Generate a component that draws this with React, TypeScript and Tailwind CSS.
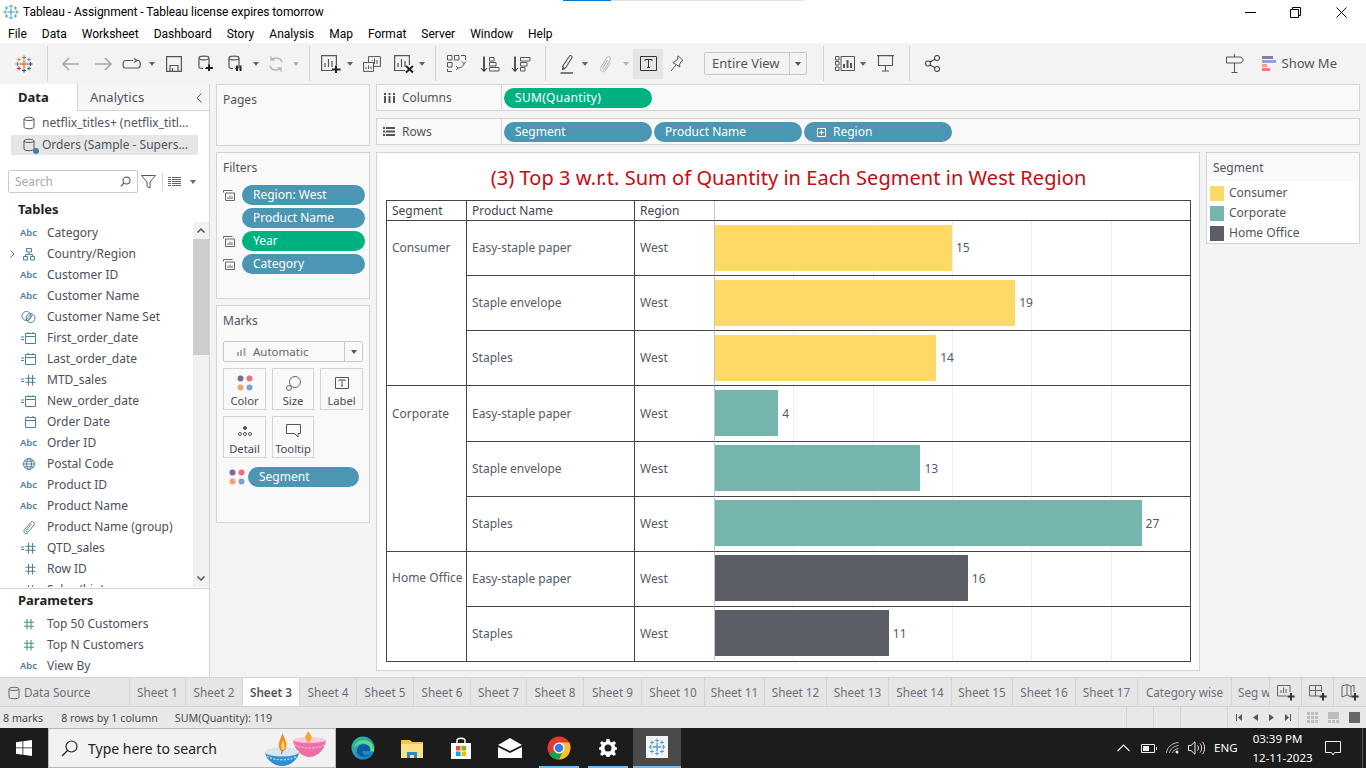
import React from "react";

const FONT = "font-['Noto_Sans','Liberation_Sans',sans-serif]";

const fields: { icon: string; name: string; chevron?: boolean }[] = [
	{ icon: "abc", name: "Category" },
	{ icon: "geo", name: "Country/Region", chevron: true },
	{ icon: "abc", name: "Customer ID" },
	{ icon: "abc", name: "Customer Name" },
	{ icon: "set", name: "Customer Name Set" },
	{ icon: "calcdate", name: "First_order_date" },
	{ icon: "calcdate", name: "Last_order_date" },
	{ icon: "calchash", name: "MTD_sales" },
	{ icon: "calcdate", name: "New_order_date" },
	{ icon: "date", name: "Order Date" },
	{ icon: "abc", name: "Order ID" },
	{ icon: "globe", name: "Postal Code" },
	{ icon: "abc", name: "Product ID" },
	{ icon: "abc", name: "Product Name" },
	{ icon: "clip", name: "Product Name (group)" },
	{ icon: "calchash", name: "QTD_sales" },
	{ icon: "hash", name: "Row ID" },
	{ icon: "hash", name: "Sales (bin)" },
];

const menus = ["File", "Data", "Worksheet", "Dashboard", "Story", "Analysis", "Map", "Format", "Server", "Window", "Help"];

const tabs: { label: string; cls: string }[] = [
	{ label: "Sheet 1", cls: "w-[56px]" },
	{ label: "Sheet 2", cls: "w-[57px]" },
	{ label: "Sheet 3", cls: "w-[57px] bg-white font-semibold text-[#4f5560]" },
	{ label: "Sheet 4", cls: "w-[57px]" },
	{ label: "Sheet 5", cls: "w-[57px]" },
	{ label: "Sheet 6", cls: "w-[57px]" },
	{ label: "Sheet 7", cls: "w-[56px]" },
	{ label: "Sheet 8", cls: "w-[57px]" },
	{ label: "Sheet 9", cls: "w-[58px]" },
	{ label: "Sheet 10", cls: "w-[63px]" },
	{ label: "Sheet 11", cls: "w-[60px]" },
	{ label: "Sheet 12", cls: "w-[62px]" },
	{ label: "Sheet 13", cls: "w-[62px]" },
	{ label: "Sheet 14", cls: "w-[63px]" },
	{ label: "Sheet 15", cls: "w-[61px]" },
	{ label: "Sheet 16", cls: "w-[63px]" },
	{ label: "Sheet 17", cls: "w-[62px]" },
	{ label: "Category wise", cls: "w-[94px]" },
];

const YELLOW = "#ffd966";
const TEAL = "#76b5ae";
const SLATE = "#5b5e66";

const rows = [
	{ product: "Easy-staple paper", value: 15, color: YELLOW },
	{ product: "Staple envelope", value: 19, color: YELLOW },
	{ product: "Staples", value: 14, color: YELLOW },
	{ product: "Easy-staple paper", value: 4, color: TEAL },
	{ product: "Staple envelope", value: 13, color: TEAL },
	{ product: "Staples", value: 27, color: TEAL },
	{ product: "Easy-staple paper", value: 16, color: SLATE },
	{ product: "Staples", value: 11, color: SLATE },
];

const Cross = ({ x, y, s, c, w = 1 }: { x: number; y: number; s: number; c: string; w?: number }) => (
	<path d={`M${x - s} ${y}H${x + s}M${x} ${y - s}V${y + s}`} stroke={c} strokeWidth={w} fill="none" />
);

const TableauLogo = ({ size = 18, mono }: { size?: number; mono?: string }) => {
	const c = (v: string) => mono ?? v;
	return (
		<svg width={size} height={size} viewBox="0 0 18 18">
			<Cross x={9} y={9} s={4} c={c("#e8762d")} w={1.4} />
			<Cross x={9} y={2.5} s={2} c={c("#5b879b")} />
			<Cross x={9} y={15.5} s={2} c={c("#1f457e")} />
			<Cross x={2.5} y={9} s={2} c={c("#59879b")} />
			<Cross x={15.5} y={9} s={2} c={c("#1f457e")} />
			<Cross x={4} y={4.5} s={2} c={c("#eb912b")} />
			<Cross x={14} y={4.5} s={2} c={c("#7099a6")} />
			<Cross x={4} y={13.5} s={2} c={c("#c72035")} />
			<Cross x={14} y={13.5} s={2} c={c("#5c6692")} />
		</svg>
	);
};

const Caret = ({ c = "#666" }: { c?: string }) => (
	<svg width="6" height="4" viewBox="0 0 6 4" className="shrink-0">
		<path d="M0 0H6L3 4Z" fill={c} />
	</svg>
);

const Slot = ({ className, children }: { className: string; children?: React.ReactNode }) => (
	<div className={`flex h-full shrink-0 items-center justify-center ${className}`}>{children}</div>
);

const Sep = ({ className = "" }: { className?: string }) => <div className={`h-[35px] w-px shrink-0 bg-[#d4d4d4] ${className}`} />;

const Ico = ({ w = 20, h = 20, c = "#555", sw = 1.2, children }: { w?: number; h?: number; c?: string; sw?: number; children: React.ReactNode }) => (
	<svg width={w} height={h} viewBox={`0 0 ${w} ${h}`} fill="none" stroke={c} strokeWidth={sw} className="shrink-0">
		{children}
	</svg>
);

const Cylinder = ({ c = "#555" }: { c?: string }) => (
	<Ico w={12} h={14} c={c} sw={1}>
		<path d="M1 3C1 .7 11 .7 11 3V11C11 13.3 1 13.3 1 11ZM1 3C1 5 11 5 11 3" />
	</Ico>
);

const FieldIcon = ({ type }: { type: string }) => {
	const c = "#4f8298";
	if (type === "abc") return <span className="text-[9.5px] font-semibold leading-none text-[#4f7f97]">Abc</span>;
	if (type === "geo")
		return (
			<Ico w={14} h={14} c={c} sw={1}>
				<path d="M4.5 1.5H9.5V5H4.5ZM1.5 9.5H5.5V13H1.5ZM8.5 9.5H12.5V13H8.5ZM7 5V7.5M3.5 9.5V7.5H10.5V9.5" />
			</Ico>
		);
	if (type === "set")
		return (
			<Ico w={15} h={14} c={c} sw={1}>
				<circle cx="5.5" cy="6" r="4.5" />
				<circle cx="9.5" cy="8" r="4.5" />
				<path d="M5 10L10 4M7 11L11.5 5" />
			</Ico>
		);
	if (type === "calcdate" || type === "date")
		return (
			<Ico w={16} h={14} c={c} sw={1}>
				{type === "calcdate" && <path d="M0 6H3M0 8.5H3" />}
				<path d="M4.5 2.5H14.5V12.5H4.5ZM4.5 5.5H14.5M7 1V3M12 1V3" />
			</Ico>
		);
	if (type === "calchash" || type === "hash")
		return (
			<Ico w={16} h={14} c={c} sw={1.1}>
				{type === "calchash" && <path d="M0 6H3M0 8.5H3" />}
				<path d="M7.5 2V12.5M11.5 2V12.5M4.5 5.3H14.5M4.5 9.3H14.5" />
			</Ico>
		);
	if (type === "globe")
		return (
			<Ico w={14} h={14} c={c} sw={1}>
				<circle cx="7" cy="7" r="5.5" />
				<ellipse cx="7" cy="7" rx="2.4" ry="5.5" />
				<path d="M1.5 7H12.5M2.3 4.2H11.7M2.3 9.8H11.7" />
			</Ico>
		);
	return (
		<Ico w={14} h={14} c={c} sw={1}>
			<path d="M9.5 4L4.500 10C3.500 11.300 5.300 12.800 6.500 11.500L12 5C13.500 3 10.800.4 9 2.200L2.500 9.500C.6 12 3.500 15 6 12.800" />
		</Ico>
	);
};

const Pill = ({ label, green, className = "", plus }: { label: string; green?: boolean; className?: string; plus?: boolean }) => (
	<div className={`flex h-[20px] items-center rounded-[10px] pl-[11px] text-[12px] text-white ${green ? "bg-[#00b180]" : "bg-[#4a96b3]"} ${className}`}>
		{plus && (
			<svg width="9" height="9" viewBox="0 0 9 9" className="mr-[7px] ml-[1px] shrink-0" fill="none" stroke="#fff" strokeWidth="1">
				<path d="M.5.5H8.500V8.500H.5ZM4.500 2V7M2 4.500H7" />
			</svg>
		)}
		{label}
	</div>
);

const Dots = ({ size = 16 }: { size?: number }) => (
	<svg width={size} height={size} viewBox="0 0 16 16" className="shrink-0">
		<circle cx="3.500" cy="3.500" r="3" fill="#7b6a95" />
		<circle cx="12.500" cy="3.500" r="3" fill="#ef6d7c" />
		<circle cx="3.500" cy="12.500" r="3" fill="#f2a36e" />
		<circle cx="12.500" cy="12.500" r="3" fill="#7ea2cf" />
	</svg>
);

const FilterIcon = () => (
	<Ico w={12} h={11} c="#666" sw={1}>
		<path d="M.5 2.500V.5H9.500M2.500 10.500H11.500V3H2.500ZM5 9V7M7 9V5.500M9 9V6.500" />
	</Ico>
);

const MarkBtn = ({ label, children, className = "" }: { label: string; children: React.ReactNode; className?: string }) => (
	<div className={`flex h-[42px] flex-col items-center justify-end border border-[#d4d4d4] text-[11.2px] leading-[16px] text-[#444b57] ${className}`}>
		<div className="flex h-[20px] items-center">{children}</div>
		{label}
	</div>
);

const Edge = () => (
	<svg width="24" height="24" viewBox="0 0 24 24">
		<defs>
			<linearGradient id="edge" x1="0" y1="0" x2="1" y2="1">
				<stop offset="0" stopColor="#35c1a0" />
				<stop offset="1" stopColor="#1170c8" />
			</linearGradient>
		</defs>
		<circle cx="12" cy="12" r="11.500" fill="url(#edge)" />
		<path d="M6 15C6 9 12 7 16 9C19 10.500 19.500 13 18.500 15H11.500C11 18 14 20 18 19C15 22 6 21.500 6 15Z" fill="#0c59a4" />
		<path d="M23 14C23 8 19 4 13 4C8 4 4 7 3 12C6 8 12 6.500 16 8.500C19.500 10.300 20 13.500 19 15.500H23Z" fill="#5ddc7c" />
	</svg>
);

const Chrome = () => (
	<svg width="24" height="24" viewBox="0 0 24 24">
		<circle cx="12" cy="12" r="11.500" fill="#e33b2e" />
		<path d="M12 12L2.100 17.700C4 21.200 7.700 23.500 12 23.500L17.700 13.500Z" fill="#1f9e48" />
		<path d="M12 6.500H22.400C23.900 9.500 23.900 14.500 21.900 17.800C19.800 21.300 16 23.500 12 23.500L17 13Z" fill="#fbc02d" />
		<circle cx="12" cy="12" r="5.500" fill="#fff" />
		<circle cx="12" cy="12" r="4.300" fill="#3b78e7" />
	</svg>
);

const Diya = () => (
	<svg width="62" height="37" viewBox="0 0 62 37">
		{/* pink lamp */}
		<path d="M28 10C29 20 37 27 44.500 27C52 27 60 20 61 10Z" fill="#ee6fa7" />
		<ellipse cx="44.500" cy="10" rx="16.500" ry="3" fill="#f9c9dc" />
		<path d="M30 15C36 19 53 19 59 15" fill="none" stroke="#f9b6d2" strokeWidth="1.500" strokeDasharray="2 1.500" />
		<path d="M42 11C38 7 42 4 43 1C45 4 49 7 45 11L43.500 14Z" fill="#f5a53a" />
		{/* blue lamp */}
		<path d="M0 22C1 30 9 36 17 36C25 36 33 30 34 22Z" fill="#2f8fd1" />
		<ellipse cx="17" cy="22" rx="17" ry="4.500" fill="#d5e6ee" />
		<path d="M2 26C8 31 26 31 32 26" fill="none" stroke="#a7d6f2" strokeWidth="1.500" strokeDasharray="2 1.500" />
		<path d="M16 21C11 15 16 9 17.500 3C19 9 25 15 19 21Z" fill="#f08a1d" />
		<path d="M17.500 20C15 16 17 13 18 10C19 13 21 16 18.500 20Z" fill="#ffd36a" />
		<path d="M17.500 20L16.500 24" stroke="#7b6a55" strokeWidth="1" />
	</svg>
);

export default function App() {
	return (
		<div className={`relative flex h-[768px] w-[1366px] flex-col overflow-hidden bg-[#f3f3f3] ${FONT}`}>
			{/* Title bar */}
			<div className="absolute top-0 left-[563px] flex h-px">
				<div className="w-[48px] bg-[#0078d7]" />
				<div className="w-[193px] bg-[#e2e2e2]" />
			</div>
			<div className="flex h-[24px] shrink-0 items-center bg-white pl-[3px] font-['Roboto',sans-serif] text-[12px] text-black">
				<TableauLogo size={16} mono="#4a9bc4" />
				<span className="ml-[4px] tracking-[-0.05px]">Tableau - Assignment - Tableau license expires tomorrow</span>
				<div className="ml-auto flex items-center">
					<svg width="11" height="1" className="mr-[34px]"><path d="M0 .5H11" stroke="#000" /></svg>
					<svg width="11" height="11" viewBox="0 0 11 11" fill="none" stroke="#000" className="mr-[35px]">
						<path d="M.5 2.500H8.500V10.500H.5ZM2.500 2.500V.5H10.500V8.500H8.500" />
					</svg>
					<svg width="11" height="11" viewBox="0 0 11 11" fill="none" stroke="#000" className="mr-[19px]">
						<path d="M.5.5L10.500 10.500M10.500.5L.5 10.500" />
					</svg>
				</div>
			</div>

			{/* Menu bar */}
			<div className="flex h-[19px] shrink-0 items-center gap-[15px] bg-white pl-[8px] font-['Roboto',sans-serif] text-[12px] text-black">
				{menus.map((m) => (
					<span key={m}>{m}</span>
				))}
			</div>

			{/* Toolbar */}
			<div className="flex h-[41px] shrink-0 items-center bg-[#f3f3f3]">
				<Slot className="w-[47px]"><TableauLogo size={18} /></Slot>
				<Sep />
				<Slot className="ml-px w-[43px]">
					<Ico w={18} h={14} c="#a9a9a9" sw={1.600}><path d="M1 7H17M7 1L1 7L7 13" /></Ico>
				</Slot>
				<Slot className="w-[22px]">
					<Ico w={18} h={14} c="#a9a9a9" sw={1.600}><path d="M1 7H17M11 1L17 7L11 13" /></Ico>
				</Slot>
				<Slot className="w-[35px]">
					<Ico w={20} h={12} c="#555"><path d="M11 2.500H3C.5 2.500.5 10 3 10H16C19 10 19 2.500 16 2.500H15M12 .5L15 2.500L12 4.500" /></Ico>
				</Slot>
				<Slot className="w-[6px]"><Caret /></Slot>
				<Slot className="w-[38px]">
					<Ico w={16} h={16} c="#555"><path d="M.6.6H15.400V15.400H.6ZM4 15V9.500H12V15M6.500 12V15M4 9" /></Ico>
				</Slot>
				<Slot className="w-[26px]">
					<Ico w={16} h={17} c="#555"><path d="M1 3C1 .6 11 .6 11 3V12C11 13 9 13.500 7 13.500M1 3V12C1 13 3 13.500 5 13.500M1 3C1 5.500 11 5.500 11 3" /><path d="M11 9.500V16M8 13H15" stroke="#222" strokeWidth="2" /></Ico>
				</Slot>
				<Slot className="w-[34px]">
					<Ico w={16} h={17} c="#555"><path d="M1 3C1 .6 11 .6 11 3V12C11 13 9 13.500 7 13.500M1 3V12C1 13 3 13.500 5 13.500M1 3C1 5.500 11 5.500 11 3" /><path d="M9 10.500V16M12.500 10.500V16" stroke="#222" strokeWidth="2" /></Ico>
				</Slot>
				<Slot className="w-[6px]"><Caret /></Slot>
				<Slot className="w-[34px]">
					<Ico w={16} h={16} c="#b5b5b5" sw={1.500}><path d="M14 6C13 2 7 .5 3.500 3.500M2 10C3 14 9 15.500 12.500 12.500M3 .5V4H6.500M13 15.500V12H9.500" /></Ico>
				</Slot>
				<Slot className="w-[6px]"><Caret c="#b5b5b5" /></Slot>
				<Sep className="ml-[10px]" />
				<Slot className="ml-[4px] w-[33px]">
					<Ico w={20} h={18} c="#555"><path d="M11 15.500H.6V.6H15.400V10M4 12V8M7.500 12V4M11 12V6" /><path d="M15 10.500V18M11 14.500H19.500" stroke="#222" strokeWidth="2" /></Ico>
				</Slot>
				<Slot className="w-[6px]"><Caret /></Slot>
				<Slot className="ml-[2px] w-[34px]">
					<Ico w={18} h={16} c="#555" sw={1}><path d="M5.500 6V.6H17.400V10.400H11M9 5V4M11.500 8V2.500M14 8V4M.6 6.500H10.500V15.400H.6ZM3 13V11M5.500 13V9.500M8 13V10.500" /></Ico>
				</Slot>
				<Slot className="w-[30px]">
					<Ico w={20} h={18} c="#555"><path d="M11 15.500H.6V.6H15.400V10M4 12V8M7.500 12V4M11 12V6" /><path d="M12 11L19 17.500M19 11L12 17.500" stroke="#222" strokeWidth="2" /></Ico>
				</Slot>
				<Slot className="w-[6px]"><Caret /></Slot>
				<Sep className="ml-[10px]" />
				<Slot className="w-[42px]">
					<Ico w={20} h={17} c="#555" sw={1}><path d="M.5.5H5V5H.5ZM7.500.5H12V5H7.500ZM.5 7.500H5V12H.5ZM14 .5H18.500V5M.5 14V16.500H5M17 8C17 11 14 13 11 13M9 11L11 13L9 15M15 6.500L17 8.500L19 6.500" /></Ico>
				</Slot>
				<Slot className="w-[24px]">
					<Ico w={20} h={16} c="#555" sw={1}><path d="M4 .5V15" stroke="#222" strokeWidth="1.500" /><path d="M1 12L4 15.500L7 12" stroke="#222" /><path d="M9.500 1.500H14V5H9.500ZM9.500 6.500H16V10H9.500ZM9.500 11.500H19V15H9.500Z" /></Ico>
				</Slot>
				<Slot className="w-[38px]">
					<Ico w={20} h={16} c="#555" sw={1}><path d="M4 .5V15" stroke="#222" strokeWidth="1.500" /><path d="M1 12L4 15.500L7 12" stroke="#222" /><path d="M9.500 1.500H19V5H9.500ZM9.500 6.500H16V10H9.500ZM9.500 11.500H14V15H9.500Z" /></Ico>
				</Slot>
				<Sep className="ml-[5px]" />
				<Slot className="ml-[6px] w-[30px]">
					<Ico w={14} h={20} c="#555" sw={1.100}><path d="M4 14L2.500 12.500L9.500 2C10.500.8 12.800 2.300 12 3.500L5.500 14ZM3 13L2.500 15.500L5 14.500" /><path d="M.5 19H13" strokeWidth="1.500" /></Ico>
				</Slot>
				<Slot className="w-[6px]"><Caret /></Slot>
				<Slot className="w-[35px]">
					<Ico w={13} h={18} c="#b5b5b5" sw={1}><path d="M8.500 5L3.800 13C3 14.500 5 15.500 5.800 14L11 5C12.500 2.500 9.500.3 7.800 2.500L1.800 12.500C.2 15.500 4 18.500 6.500 15.500L11.500 7.500" /></Ico>
				</Slot>
				<Slot className="w-[6px]"><Caret c="#b5b5b5" /></Slot>
				<Slot className="ml-[4px] !h-[30px] w-[30px] bg-[#e5e5e5]">
					<svg width="17" height="15" viewBox="0 0 17 15" fill="none" stroke="#333">
						<path d="M.5.5H16.500V14.500H.5Z" />
						<path d="M5 5V3.500H12V5M8.500 3.500V11.500M7 11.500H10" />
					</svg>
				</Slot>
				<Slot className="w-[28px]">
					<Ico w={14} h={17} c="#555" sw={1}><path d="M8 .8L13 5.500L11 6.500L9.500 10L10 12L2.800 7.500L4.800 6.500L7.500 4.500ZM6 10L1 16" /></Ico>
				</Slot>
				<div className="ml-[13px] flex h-[23px] w-[103px] shrink-0 items-center rounded-[2px] border border-[#c8c8c8] pl-[7px] text-[13px] text-[#4f5560]">
					<span className="w-[77px]">Entire View</span>
					<div className="flex h-full flex-1 items-center justify-center border-l border-[#c8c8c8]"><Caret c="#555" /></div>
				</div>
				<Sep className="ml-[16px]" />
				<Slot className="ml-[6px] w-[30px]">
					<Ico w={20} h={15} c="#555" sw={1}><path d="M.5.5H4V4H.5ZM.5 5.500H4V9H.5ZM.5 11H4V14.500H.5ZM6 .5H19.500V14.500H6Z" /><path d="M9 12V8M12.500 12V4M16 12V7" strokeWidth="2" /></Ico>
				</Slot>
				<Slot className="w-[6px]"><Caret /></Slot>
				<Slot className="w-[38px]">
					<Ico w={17} h={17} c="#555" sw={1.100}><path d="M0 .6H17M1.500.6V10.500H15.500V.6M8.500 10.500V15.500M5 16H12" /></Ico>
				</Slot>
				<Sep className="ml-[5px]" />
				<Slot className="w-[44px]">
					<Ico w={15} h={17} c="#444" sw={1.100}><circle cx="3" cy="8.500" r="2.500" /><circle cx="12" cy="3" r="2.500" /><circle cx="12" cy="14" r="2.500" /><path d="M5 7L10 4.200M5 10L10 12.800" /></Ico>
				</Slot>
				<div className="ml-auto mr-[29px] flex items-center">
					<Ico w={18} h={19} c="#555" sw={1}><path d="M.5 3H15L17.500 6L15 9H.5ZM8.500 0V3M8.500 9V18M5.500 18.500H11.500" /></Ico>
					<svg width="14" height="16" viewBox="0 0 14 16" className="ml-[18px] shrink-0">
						<rect y="0" width="11" height="3" fill="#8a7aa3" />
						<rect y="4" width="14" height="3" fill="#86a7d3" />
						<rect y="8" width="5" height="3" fill="#f3a672" />
						<rect y="12" width="8" height="3" fill="#ef7783" />
					</svg>
					<span className="ml-[6px] text-[13px] text-[#4f5560]">Show Me</span>
				</div>
			</div>

			{/* Main */}
			<div className="flex min-h-0 flex-1">
				{/* Data pane */}
				<div className="flex w-[210px] shrink-0 flex-col border-r border-[#d4d4d4] bg-white">
					<div className="flex h-[27px] shrink-0 text-[13px]">
						<div className="flex w-[77px] items-center pl-[18px] font-bold text-[#222]">Data</div>
						<div className="flex flex-1 items-center justify-between border-b border-l border-[#d4d4d4] bg-[#f6f6f6] pt-px pr-[7px] pl-[12px] text-[#4f5560]">
							Analytics
							<svg width="6" height="10" viewBox="0 0 6 10" fill="none" stroke="#555"><path d="M5.500.5L1 5L5.500 9.500" /></svg>
						</div>
					</div>
					<div className="flex h-[19px] shrink-0 items-center pt-[4px] pl-[23px] text-[12px] text-[#4f5560]">
						<Cylinder />
						<span className="ml-[7px]">netflix_titles+ (netflix_titl...</span>
					</div>
					<div className="relative mx-[11px] mt-[5px] flex h-[20px] shrink-0 items-center bg-[#e6e6e6] pl-[12px] text-[12px] text-[#4f5560]">
						<Cylinder />
						<div className="absolute top-[13px] left-[22px] h-[6px] w-[6px] rounded-full bg-[#3d7f9e]" />
						<span className="ml-[7px]">Orders (Sample - Supers...</span>
					</div>
					<div className="mt-[15px] flex h-[23px] shrink-0 items-center pl-[8px]">
						<div className="flex h-[23px] w-[130px] items-center justify-between rounded-[2px] border border-[#c8c8c8] pr-[6px] pl-[6px] text-[12px] text-[#a8a8a8]">
							Search
							<svg width="11" height="11" viewBox="0 0 11 11" fill="none" stroke="#555" strokeWidth="1.100"><circle cx="6.500" cy="4.500" r="3.500" /><path d="M4 7L.8 10.300" /></svg>
						</div>
						<svg width="15" height="14" viewBox="0 0 15 14" fill="none" stroke="#555" className="ml-[3px]"><path d="M.5.5H14.500L9 7V13L6 11.500V7Z" /></svg>
						<div className="mr-[5px] ml-[6px] h-[18px] w-px bg-[#d4d4d4]" />
						<svg width="13" height="9" viewBox="0 0 13 9" fill="none" stroke="#666"><path d="M0 .5H3M4 .5H13M0 2.500H3M4 2.500H13M0 4.500H3M4 4.500H13M0 6.500H3M4 6.500H13M0 8.500H3M4 8.500H13" /></svg>
						<div className="ml-[9px]"><Caret /></div>
					</div>
					<div className="flex h-[29px] shrink-0 items-center pt-[4px] pl-[18px] text-[13px] font-bold text-[#222]">Tables</div>
					<div className="flex h-[365px] shrink-0">
						<div className="h-full flex-1 overflow-hidden">
							{fields.map((f) => (
								<div key={f.name} className="relative flex h-[21px] items-center text-[12px] text-[#4a505c]">
									{f.chevron && (
										<svg width="5" height="8" viewBox="0 0 5 8" fill="none" stroke="#666" className="absolute left-[10px]"><path d="M.5.5L4 4L.5 7.500" /></svg>
									)}
									<div className="flex w-[47px] shrink-0 justify-center pl-[10px]"><FieldIcon type={f.icon} /></div>
									{f.name}
								</div>
							))}
						</div>
						<div className="flex h-full w-[16px] shrink-0 flex-col bg-[#f1f1f1]">
							<div className="flex h-[17px] items-center justify-center">
								<svg width="8" height="5" viewBox="0 0 8 5" fill="none" stroke="#555" strokeWidth="1.500"><path d="M.5 4.500L4 1L7.500 4.500" /></svg>
							</div>
							<div className="h-[116px] bg-[#cdcdcd]" />
							<div className="mt-auto flex h-[17px] items-center justify-center">
								<svg width="8" height="5" viewBox="0 0 8 5" fill="none" stroke="#555" strokeWidth="1.500"><path d="M.5.5L4 4L7.500.5" /></svg>
							</div>
						</div>
					</div>
					<div className="mt-px flex h-[25px] shrink-0 items-center border-t border-[#d4d4d4] pl-[18px] text-[13px] font-bold text-[#222]">Parameters</div>
					{[
						{ icon: "param", name: "Top 50 Customers" },
						{ icon: "param", name: "Top N Customers" },
						{ icon: "abc", name: "View By" },
					].map((p) => (
						<div key={p.name} className="flex h-[21px] shrink-0 items-center text-[12px] text-[#4a505c]">
							<div className="flex w-[47px] shrink-0 justify-center pl-[10px]">
								{p.icon === "abc" ? (
									<FieldIcon type="abc" />
								) : (
									<Ico w={12} h={14} c="#3f9b7f" sw={1.100}><path d="M4 2V12.500M8 2V12.500M1 5.300H11M1 9.300H11" /></Ico>
								)}
							</div>
							{p.name}
						</div>
					))}
				</div>

				{/* Cards column */}
				<div className="ml-[6px] flex w-[154px] shrink-0 flex-col gap-[6px] text-[12px] text-[#4f5560]">
					<div className="h-[62px] border border-[#d4d4d4] bg-[#f9f9f9] pt-[6px] pl-[6px]">Pages</div>
					<div className="flex h-[147px] flex-col border border-[#d4d4d4] bg-[#f9f9f9] pt-[6px] pr-[4px] pl-[6px]">
						Filters
						<div className="mt-[8px] flex flex-col gap-[3px]">
							{[
								{ label: "Region: West", icon: true },
								{ label: "Product Name" },
								{ label: "Year", icon: true, green: true },
								{ label: "Category", icon: true },
							].map((f) => (
								<div key={f.label} className="flex items-center">
									<div className="flex w-[19px] shrink-0 items-center">{f.icon && <FilterIcon />}</div>
									<Pill label={f.label} green={f.green} className="flex-1" />
								</div>
							))}
						</div>
					</div>
					<div className="h-[218px] border border-[#d4d4d4] bg-[#f9f9f9] pt-[6px] pr-[6px] pl-[6px]">
						Marks
						<div className="mt-[11px] flex h-[21px] items-center rounded-[2px] border border-[#c8c8c8] text-[11.5px] text-[#666]">
							<svg width="10" height="10" viewBox="0 0 10 10" className="ml-[12px]"><path d="M1 9V5H3V9ZM4 9V3H6V9ZM7.500 9V1H9.500V9Z" fill="#aaa" /></svg>
							<span className="ml-[7px] flex-1">Automatic</span>
							<div className="flex h-full w-[18px] items-center justify-center border-l border-[#c8c8c8]"><Caret c="#555" /></div>
						</div>
						<div className="mt-[6px] grid grid-cols-[43px_42px_43px] gap-x-[6px] gap-y-[6px]">
							<MarkBtn label="Color"><Dots /></MarkBtn>
							<MarkBtn label="Size">
								<Ico w={15} h={15} c="#666" sw={1}><circle cx="9" cy="6" r="5.500" /><circle cx="3" cy="12" r="2.500" fill="#f9f9f9" /></Ico>
							</MarkBtn>
							<MarkBtn label="Label">
								<svg width="14" height="12" viewBox="0 0 14 12" fill="none" stroke="#555"><path d="M.5.5H13.500V11.500H.5ZM4 4V3H10V4M7 3V9M6 9H8" /></svg>
							</MarkBtn>
							<MarkBtn label="Detail">
								<svg width="14" height="10" viewBox="0 0 14 10" fill="none" stroke="#555"><circle cx="7" cy="2" r="1.500" fill="#555" /><circle cx="2" cy="8" r="1.500" /><circle cx="7" cy="8" r="1.500" /><circle cx="12" cy="8" r="1.500" /></svg>
							</MarkBtn>
							<MarkBtn label="Tooltip">
								<Ico w={15} h={14} c="#555" sw={1}><path d="M.5.5H14.500V9.500H12V13L8.500 9.500H.5Z" /></Ico>
							</MarkBtn>
						</div>
						<div className="mt-[9px] ml-[6px] flex items-center">
							<Dots />
							<Pill label="Segment" className="ml-[3px] w-[111px]" />
						</div>
					</div>
				</div>

				{/* Shelves and view */}
				<div className="ml-[6px] flex w-[984px] shrink-0 flex-col text-[12px] text-[#4f5560]">
					<div className="flex h-[27px] shrink-0 border border-[#d4d4d4] bg-[#f9f9f9]">
						<div className="flex w-[125px] shrink-0 items-center border-r border-[#d4d4d4] pl-[7px]">
							<svg width="11" height="10" viewBox="0 0 11 10" className="mr-[7px]" fill="#555"><path d="M0 0H2V2H0ZM4.500 0H6.500V2H4.500ZM9 0H11V2H9ZM0 3H2V10H0ZM4.500 3H6.500V10H4.500ZM9 3H11V10H9Z" /></svg>
							Columns
						</div>
						<div className="flex items-center pt-px pl-[2px]">
							<Pill label="SUM(Quantity)" green className="w-[148px] tracking-[0.3px]" />
						</div>
					</div>
					<div className="mt-[7px] flex h-[27px] shrink-0 border border-[#d4d4d4] bg-[#f9f9f9]">
						<div className="flex w-[125px] shrink-0 items-center border-r border-[#d4d4d4] pl-[6px]">
							<svg width="12" height="9" viewBox="0 0 12 9" className="mr-[7px]" fill="#555"><path d="M0 0H2V2H0ZM3 0H12V2H3ZM0 3.500H2V5.500H0ZM3 3.500H12V5.500H3ZM0 7H2V9H0ZM3 7H12V9H3Z" /></svg>
							Rows
						</div>
						<div className="flex items-center gap-[2px] pt-px pl-[2px]">
							<Pill label="Segment" className="w-[148px]" />
							<Pill label="Product Name" className="w-[148px]" />
							<Pill label="Region" plus className="w-[148px] !pl-[12px]" />
						</div>
					</div>
					<div className="mt-[7px] flex items-start gap-[6px]">
						{/* Worksheet */}
						<div className="h-[519px] w-[824px] shrink-0 border border-[#d4d4d4] bg-white pt-[11px] pl-[9px]">
							<div className="h-[36px] w-[805px] text-center text-[20px] leading-[28px] tracking-[0.05px] text-[#c8090f]">
								(3) Top 3 w.r.t. Sum of Quantity in Each Segment in West Region
							</div>
							<div className="grid w-[805px] grid-cols-[80px_168px_80px_1fr] grid-rows-[20px_55px_55px_55px_56px_55px_55px_55px_55px] border-t border-r border-l border-[#444] text-[12px] text-[#555b66]">
								<div className="flex items-center border-r border-b border-[#444] pl-[5px] text-[#3f4550]">Segment</div>
								<div className="flex items-center border-r border-b border-[#444] pl-[5px] text-[#3f4550]">Product Name</div>
								<div className="flex items-center border-r border-b border-[#444] border-r-[#c4c4c4] pl-[5px] text-[#3f4550]">Region</div>
								<div className="border-b border-[#444]" />
								{[
									{ name: "Consumer", cls: "row-span-3", h: "h-[52px] mt-px" },
									{ name: "Corporate", cls: "row-span-3", h: "h-[55px]" },
									{ name: "Home Office", cls: "row-span-2", h: "h-[52px]" },
								].map((seg, s) => {
									const start = s === 0 ? 0 : s === 1 ? 3 : 6;
									const count = s === 2 ? 2 : 3;
									return (
										<React.Fragment key={seg.name}>
											<div className={`col-start-1 border-r border-b border-[#444] pl-[5px] ${seg.cls}`}>
												<div className={`flex items-center whitespace-nowrap ${seg.h}`}>{seg.name}</div>
											</div>
											{rows.slice(start, start + count).map((r, i) => (
												<React.Fragment key={i}>
													<div className="col-start-2 flex items-center border-r border-b border-[#444] pl-[5px]">{r.product}</div>
													<div className="col-start-3 flex items-center border-r border-b border-[#444] border-r-[#c4c4c4] pl-[5px]">West</div>
													<div className="col-start-4 flex items-center border-b border-[#444] bg-[repeating-linear-gradient(90deg,transparent_0,transparent_78.3px,#efefef_78.3px,#efefef_79.3px)]">
														<div className={`h-[46px] ${s > 0 ? "mb-[2px]" : ""}`} style={{ width: r.value * 15.8, background: r.color }} />
														<span className="ml-[4px]">{r.value}</span>
													</div>
												</React.Fragment>
											))}
										</React.Fragment>
									);
								})}
							</div>
						</div>
						{/* Legend */}
						<div className="h-[92px] w-[154px] shrink-0 border border-[#d4d4d4] bg-white">
							<div className="flex h-[28px] items-center bg-[#f9f9f9] pt-[2px] pl-[6px]">Segment</div>
							<div className="pt-[2px] pl-[3px]">
								{[
									{ label: "Consumer", c: "bg-[#ffd966]" },
									{ label: "Corporate", c: "bg-[#76b5ae]" },
									{ label: "Home Office", c: "bg-[#5b5e66]" },
								].map((l) => (
									<div key={l.label} className="flex h-[20px] items-center">
										<div className={`h-[15px] w-[14px] ${l.c}`} />
										<span className="ml-[5px]">{l.label}</span>
									</div>
								))}
							</div>
						</div>
					</div>
				</div>
			</div>

			{/* Sheet tabs */}
			<div className="flex h-[30px] shrink-0 items-stretch border-t border-b border-[#d4d4d4] bg-[#e6e6e6] text-[11.7px] text-[#6a6f78]">
				<div className="flex w-[130px] shrink-0 items-center border-r border-[#d4d4d4] pt-px pl-[8px]">
					<Cylinder c="#666" />
					<span className="ml-[4px]">Data Source</span>
				</div>
				{tabs.map((t) => (
					<div key={t.label} className={`flex shrink-0 items-center justify-center border-r border-[#d4d4d4] pt-px whitespace-nowrap ${t.cls}`}>
						{t.label}
					</div>
				))}
				<div className="w-[37px] shrink-0 overflow-hidden pl-[6px] leading-[28px] whitespace-nowrap">Seg wise</div>
				{["sheet", "dash", "story"].map((k) => (
					<div key={k} className="flex w-[32px] shrink-0 items-center justify-center border-l border-[#d4d4d4]">
						<Ico w={18} h={17} c="#666" sw={1}>
							{k === "sheet" && <path d="M10 12H.5V1.500H13V8M4 9V6M6.500 9V3.500M9 9V5" />}
							{k === "dash" && <path d="M10 12H.5V1.500H12.500V8M.5 6.500H12.500M6.500 1.500V12" />}
							{k === "story" && <path d="M10 13L6 11L1 13V2L6 .5L10 2.500L13 1V8M6 .5V11M10 2.500V13" />}
							<path d="M14 9V16.500M10.500 12.500H17.500" stroke="#333" strokeWidth="2" />
						</Ico>
					</div>
				))}
			</div>

			{/* Status bar */}
			<div className="flex h-[21px] shrink-0 items-center bg-[#e8e8e8] text-[10.7px] text-[#444b57]">
				<span className="ml-[3px] pt-px">8 marks</span>
				<span className="ml-[18px] pt-px">8 rows by 1 column</span>
				<span className="ml-[17px] pt-px">SUM(Quantity): 119</span>
				<div className="ml-auto flex h-full items-center">
					<div className="h-full w-[27px] border-l border-[#d4d4d4]" />
					<div className="h-full w-[27px] border-l border-[#d4d4d4]" />
					<div className="h-full w-[47px] border-l border-[#d4d4d4]" />
					<div className="flex h-full w-[71px] items-center gap-[11px] border-l border-[#d4d4d4] pl-[8px]">
						<svg width="6" height="7" viewBox="0 0 6 7" fill="#555"><path d="M0 0H1V7H0ZM6 0V7L2 3.500Z" /></svg>
						<svg width="5" height="7" viewBox="0 0 5 7" fill="#555"><path d="M5 0V7L0 3.500Z" /></svg>
						<svg width="5" height="7" viewBox="0 0 5 7" fill="#555"><path d="M0 0V7L5 3.500Z" /></svg>
						<svg width="6" height="7" viewBox="0 0 6 7" fill="#555"><path d="M6 0H5V7H6ZM0 0V7L4 3.500Z" /></svg>
					</div>
					<div className="flex h-full w-[68px] items-center gap-[10px] border-l border-[#d4d4d4] pl-[8px]">
						<svg width="11" height="11" viewBox="0 0 11 11" fill="#bcbcbc"><path d="M0 0H3V3H0ZM4 0H7V3H4ZM8 0H11V3H8ZM0 4H3V7H0ZM4 4H7V7H4ZM8 4H11V7H8ZM0 8H3V11H0ZM4 8H7V11H4ZM8 8H11V11H8Z" /></svg>
						<svg width="11" height="11" viewBox="0 0 11 11" fill="#bcbcbc"><path d="M0 0H11V7H0ZM0 8H3V11H0ZM4 8H7V11H4ZM8 8H11V11H8Z" /></svg>
						<div className="h-[11px] w-[11px] bg-[#666]" />
					</div>
				</div>
			</div>

			{/* Windows taskbar */}
			<div className="flex h-[40px] shrink-0 items-stretch bg-[#1c1c1c] text-white">
				<div className="flex w-[48px] shrink-0 items-center justify-center">
					<svg width="16" height="16" viewBox="0 0 16 16" fill="#fff"><path d="M0 2.200L6.500 1.300V7.500H0ZM7.300 1.200L16 0V7.500H7.300ZM0 8.300H6.500V14.700L0 13.800ZM7.300 8.300H16V16L7.300 14.800Z" /></svg>
				</div>
				<div className="relative flex w-[288px] shrink-0 items-center border border-[#bbb] bg-[#f2f2f2] pl-[12px] text-[14px] text-[#222]">
					<svg width="17" height="17" viewBox="0 0 17 17" fill="none" stroke="#222" strokeWidth="1.200"><circle cx="10.500" cy="6.500" r="5.500" /><path d="M6.500 10.500L1 16" /></svg>
					<span className="ml-[10px]">Type here to search</span>
					<div className="absolute top-px left-[216px]"><Diya /></div>
				</div>
				<div className="flex w-[297px] shrink-0 items-center pl-[2px]">
					<Slot className="w-[49px]"><Edge /></Slot>
					<Slot className="w-[49px]">
						<svg width="22" height="20" viewBox="0 0 22 20"><path d="M0 2H9L11 4H22V20H0Z" fill="#f4c44e" /><path d="M0 6H22V20H0Z" fill="#fde08a" /><path d="M6 14H16V20H13V17H9V20H6Z" fill="#2a88c8" /></svg>
					</Slot>
					<Slot className="w-[49px]">
						<svg width="22" height="22" viewBox="0 0 22 22"><path d="M1 6H21V22H1Z" fill="#fff" /><path d="M7 6V3.500C7 .5 15 .5 15 3.500V6" fill="none" stroke="#fff" strokeWidth="1.500" /><path d="M6 9H10.500V13.500H6Z" fill="#f25022" /><path d="M11.500 9H16V13.500H11.500Z" fill="#7fba00" /><path d="M6 14.500H10.500V19H6Z" fill="#00a4ef" /><path d="M11.500 14.500H16V19H11.500Z" fill="#ffb900" /></svg>
					</Slot>
					<Slot className="w-[49px]">
						<svg width="24" height="20" viewBox="0 0 24 20"><path d="M0 7L12 0L24 7L12 13Z" fill="#fff" /><path d="M0 9L12 15L24 9V20H0Z" fill="#fff" /></svg>
					</Slot>
					<Slot className="relative w-[49px]">
						<Chrome />
						<div className="absolute bottom-0 left-[5px] h-[2px] w-[40px] bg-[#76b9ed]" />
					</Slot>
					<Slot className="relative w-[49px]">
						<svg width="18" height="18" viewBox="0 0 18 18"><path d="M7.500 0H10.500L11 2.500L13 3.400L15.200 2L17 4L15.500 6L16.300 8L18 8.500V10.500L16.300 11L15.500 13L17 15L15 17L13 15.500L11 16.300L10.500 18H7.500L7 16.300L5 15.500L3 17L1 15L2.500 13L1.700 11L0 10.500V8.500L1.700 8L2.500 6L1 4L3 2L5 3.400L7 2.500ZM9 5.500A3.500 3.500 0 1 0 9 12.500A3.500 3.500 0 1 0 9 5.500Z" fill="#fff" fillRule="evenodd" /></svg>
						<div className="absolute bottom-0 left-[5px] h-[2px] w-[40px] bg-[#76b9ed]" />
					</Slot>
				</div>
				<div className="flex w-[48px] shrink-0 items-center justify-center border-b-2 border-[#76b9ed] bg-[#4a4a4a]">
					<div className="flex h-[22px] w-[22px] items-center justify-center bg-[#f2f5f8]">
						<TableauLogo size={18} mono="#5b9fd4" />
					</div>
				</div>
				<div className="flex flex-1 items-center pl-[436px]">
					<svg width="13" height="8" viewBox="0 0 13 8" fill="none" stroke="#eee" strokeWidth="1.200"><path d="M.5 7L6.500 1L12.500 7" /></svg>
					<svg width="16" height="9" viewBox="0 0 16 9" fill="none" stroke="#eee" className="ml-[11px]"><path d="M.5.5H13.500V8.500H.5ZM15.500 3V6" /><path d="M2 2H8V7H2Z" fill="#eee" stroke="none" /></svg>
					<svg width="13" height="12" viewBox="0 0 13 12" fill="none" stroke="#bbb" className="ml-[9px]"><path d="M.5 11C1 5 6 1 12.500.5M3.500 11C4 7 8 4 12.500 3.500M6.500 11C7 9 9 7 12.500 6.500" /><circle cx="11" cy="10" r="1.500" fill="#eee" stroke="none" /></svg>
					<svg width="17" height="14" viewBox="0 0 17 14" fill="none" stroke="#eee" className="ml-[9px]"><path d="M.5 4.500H3L7 .8V13.200L3 9.500H.5ZM9.500 4.500C10.800 6 10.800 8 9.500 9.500M12 2.500C14.200 5 14.200 9 12 11.500M14.500.8C17.300 4.500 17.300 9.500 14.500 13.200" /></svg>
					<span className="ml-[9px] text-[11.5px]">ENG</span>
					<div className="ml-[15px] w-[50px] text-center text-[11.5px] leading-[19px] whitespace-nowrap">
						<div>03:39 PM</div>
						<div>12-11-2023</div>
					</div>
					<svg width="16" height="15" viewBox="0 0 16 15" fill="none" stroke="#eee" className="ml-[22px]"><path d="M.5.5H15.500V11.500H9.500L8 14L6.500 11.500H.5Z" /></svg>
					<div className="ml-[21px] h-full w-px bg-[#555]" />
				</div>
			</div>
		</div>
	);
}
